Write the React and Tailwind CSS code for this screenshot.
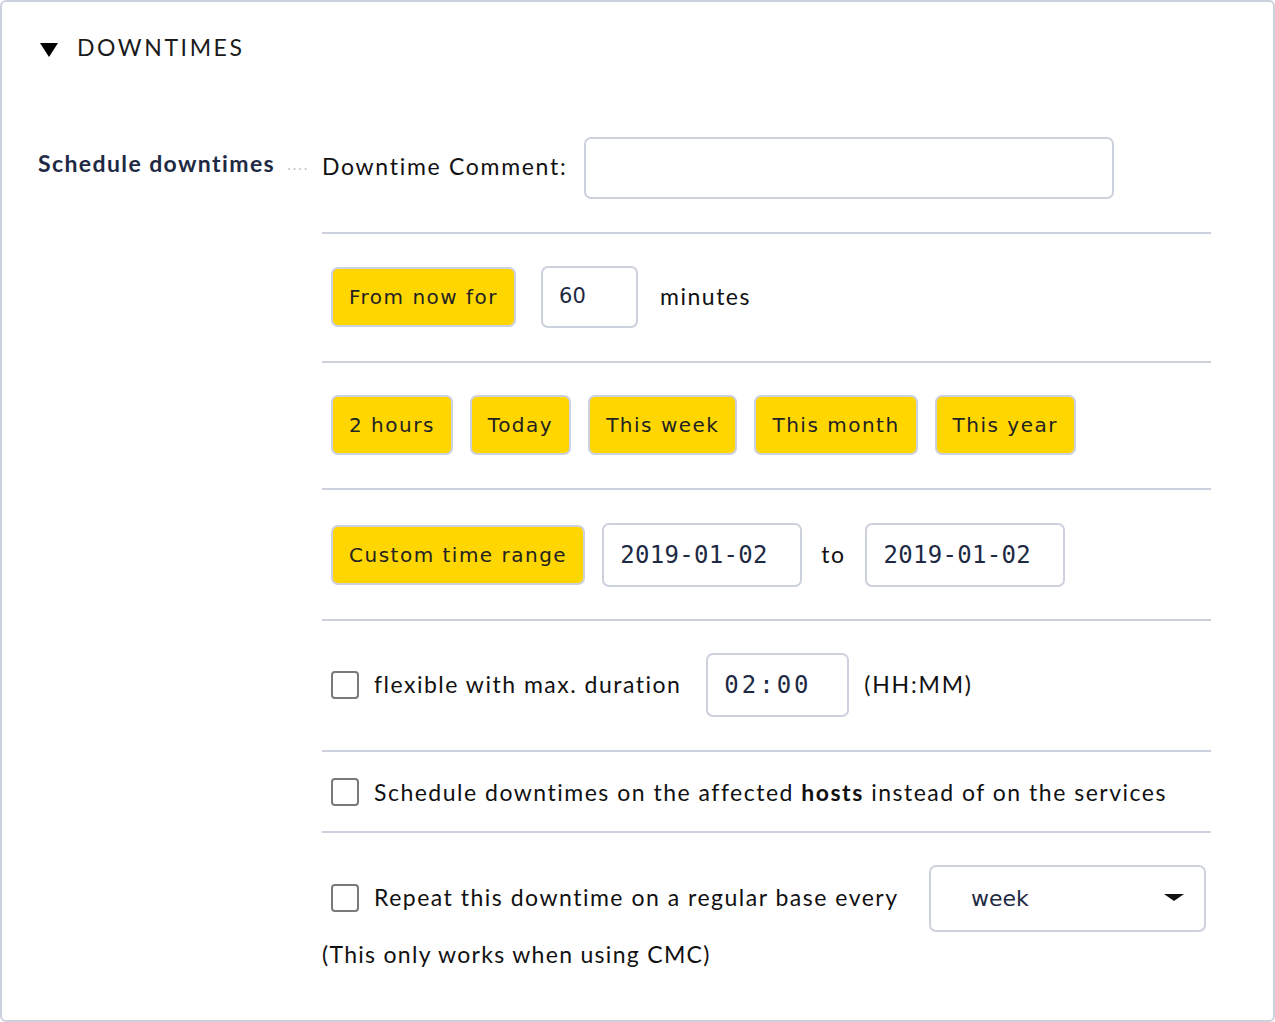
import React from 'react';

const lato = { fontFamily: "Lato, 'Noto Sans', sans-serif" };
const dejavu = { fontFamily: "'DejaVu Sans', Verdana, sans-serif" };
const mono = { fontFamily: "'DejaVu Sans Mono', 'Liberation Mono', monospace" };

function YellowButton({ children }) {
  return (
    <button
      className="h-[60px] px-[16px] bg-[#ffd600] border-2 border-[#cdd1de] rounded-[7px] text-[20px] tracking-[1.5px] text-[#222222]"
      style={dejavu}
    >
      {children}
    </button>
  );
}

function Checkbox() {
  return <span className="inline-block w-[28px] h-[28px] border-2 border-[#7a7a7a] rounded-[4px] bg-white shrink-0" />;
}

function Row({ children, className = '' }) {
  return (
    <div className={`flex items-center border-b-2 border-[#cdd1de] ${className}`}>
      {children}
    </div>
  );
}

export default function App() {
  return (
    <div className="w-[1275px] h-[1022px] bg-white text-[#111111]" style={lato}>
      <div className="w-full h-full border-2 border-[#cdd1de] rounded-[6px]">
        {/* Section header */}
        <div className="flex items-start pl-[37px] pt-[25px] h-[94px]">
          <div className="flex items-center gap-[18px] mt-[3px]">
            <svg width="20" height="16" viewBox="0 0 20 16" className="mt-[5px]">
              <polygon points="1,1 19,1 10,15" fill="#000" />
            </svg>
            <span className="text-[23px] tracking-[2.6px] text-[#1b1b1b]">DOWNTIMES</span>
          </div>
        </div>

        <div className="flex pt-[41px]">
          {/* Left label */}
          <div className="w-[320px] shrink-0 pl-[36px] pt-[9px] flex items-start">
            <span className="text-[23px] font-bold tracking-[1.4px] text-[#1e2a44]">Schedule downtimes</span>
            <span className="ml-[12px] mt-[7px] text-[15px] tracking-[2px] text-[#c2c2c2]">....</span>
          </div>

          {/* Right content */}
          <div className="w-[889px]">
            <Row className="pb-[33px]">
              <span className="text-[23px] tracking-[1.7px] mr-[17px] mb-[3px]">Downtime Comment:</span>
              <div className="w-[530px] h-[62px] border-2 border-[#cdd1de] rounded-[7px] bg-white" />
            </Row>

            <Row className="pt-[32px] pb-[33px] pl-[9px]">
              <YellowButton>From now for</YellowButton>
              <div
                className="ml-[25px] w-[97px] h-[62px] border-2 border-[#cdd1de] rounded-[7px] flex items-center pl-[16px] text-[21px] text-[#1e2a44]"
                style={dejavu}
              >
                60
              </div>
              <span className="ml-[22px] text-[23px] tracking-[1.5px] mb-[2px]">minutes</span>
            </Row>

            <Row className="pt-[32px] pb-[33px] pl-[9px] gap-[17px]">
              <YellowButton>2 hours</YellowButton>
              <YellowButton>Today</YellowButton>
              <YellowButton>This week</YellowButton>
              <YellowButton>This month</YellowButton>
              <YellowButton>This year</YellowButton>
            </Row>

            <Row className="pt-[33px] pb-[32px] pl-[9px]">
              <YellowButton>Custom time range</YellowButton>
              <div
                className="ml-[17px] w-[200px] h-[64px] border-2 border-[#cdd1de] rounded-[7px] flex items-center pl-[16px] text-[24px] tracking-[0.3px] text-[#1e2a44]"
                style={mono}
              >
                2019-01-02
              </div>
              <span className="ml-[19px] mr-[20px] text-[23px] tracking-[1.5px] mb-[2px]">to</span>
              <div
                className="w-[200px] h-[64px] border-2 border-[#cdd1de] rounded-[7px] flex items-center pl-[16px] text-[24px] tracking-[0.3px] text-[#1e2a44]"
                style={mono}
              >
                2019-01-02
              </div>
            </Row>

            <Row className="pt-[32px] pb-[33px] pl-[9px]">
              <Checkbox />
              <span className="ml-[15px] text-[23px] tracking-[1.5px] mb-[2px]">flexible with max. duration</span>
              <div
                className="ml-[25px] w-[143px] h-[64px] border-2 border-[#cdd1de] rounded-[7px] flex items-center pl-[16px] text-[24px] tracking-[3px] text-[#1e2a44]"
                style={mono}
              >
                02:00
              </div>
              <span className="ml-[15px] text-[23px] tracking-[1.8px] mb-[2px]">(HH:MM)</span>
            </Row>

            <Row className="pt-[23px] pb-[21px] pl-[9px]">
              <Checkbox />
              <span className="ml-[15px] text-[23px] tracking-[1.5px]">
                Schedule downtimes on the affected <b>hosts</b> instead of on the services
              </span>
            </Row>

            <div className="flex items-center pt-[32px] pl-[9px]">
              <Checkbox />
              <span className="ml-[15px] text-[23px] tracking-[1.5px] mb-[2px]">Repeat this downtime on a regular base every</span>
              <div className="ml-auto mr-[5px] w-[277px] h-[67px] border-2 border-[#cdd1de] rounded-[7px] flex items-center pl-[40px] pr-[20px]">
                <span className="text-[22px] text-[#1e2a44]" style={dejavu}>week</span>
                <svg width="20" height="8" viewBox="0 0 20 8" className="ml-auto">
                  <polygon points="0,0 20,0 10,7" fill="#111" />
                </svg>
              </div>
            </div>
            <div className="pt-[5px] text-[23px] tracking-[1.3px]">(This only works when using CMC)</div>
          </div>
        </div>
      </div>
    </div>
  );
}
